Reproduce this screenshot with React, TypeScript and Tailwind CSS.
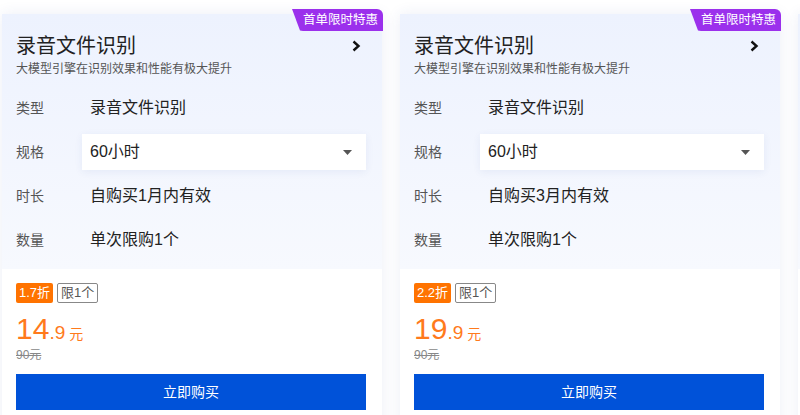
import React from "react";

type Plan = {
  duration: string;
  discount: string;
  price: string;
  decimal: string;
};

const plans: Plan[] = [
  { duration: "自购买1月内有效", discount: "1.7折", price: "14", decimal: ".9" },
  { duration: "自购买3月内有效", discount: "2.2折", price: "19", decimal: ".9" },
];

const font = {
  fontFamily: '"Liberation Sans", "Noto Sans CJK SC", sans-serif',
};

function Row({ label, children }: { label: string; children: React.ReactNode }) {
  return (
    <div className="flex h-[44px] items-center">
      <div className="w-[66px] shrink-0 text-[14px] text-[#555]">{label}</div>
      <div className="flex-1">{children}</div>
    </div>
  );
}

function PlanCard({ plan }: { plan: Plan }) {
  return (
    <div className="relative w-[380px] shrink-0 bg-white shadow-[0_0_14px_rgba(40,70,160,0.09)]">
      {/* Badge */}
      <div className="absolute right-[-1px] top-[-5px] flex h-[22px] w-[91px] items-center justify-end rounded-tr-[6px] bg-[#9b30ec] pr-[5px] text-[12.5px] text-white [clip-path:polygon(0_0,100%_0,100%_100%,11px_100%,8px_98%)]">
        首单限时特惠
      </div>

      {/* Top */}
      <div className="bg-gradient-to-b from-[#edf2fe] to-[#f7f9fe] pl-[14px] pr-[16px] pt-[18px] pb-[7px]">
        <div className="flex h-[28px] items-center justify-between">
          <span className="text-[20px] text-[#222]">录音文件识别</span>
          <svg width="10" height="12" viewBox="0 0 10 12" className="mr-[5px]">
            <path d="M2.5 1.5 L7.5 6 L2.5 10.5" fill="none" stroke="#111" strokeWidth="2.4" />
          </svg>
        </div>
        <div className="h-[18px] text-[12px] leading-[18px] text-[#555]">
          大模型引擎在识别效果和性能有极大提升
        </div>
        <div className="mt-[8px]">
          <Row label="类型">
            <span className="pl-[8px] text-[16px] text-[#222]">录音文件识别</span>
          </Row>
          <Row label="规格">
            <div className="flex h-[36px] items-center justify-between bg-white pl-[8px] pr-[14px] shadow-[0_2px_8px_rgba(40,70,160,0.07)]">
              <span className="text-[16px] text-[#222]">60小时</span>
              <svg width="9" height="5" viewBox="0 0 9 5">
                <path d="M0 0 L9 0 L4.5 5 Z" fill="#555" />
              </svg>
            </div>
          </Row>
          <Row label="时长">
            <span className="pl-[8px] text-[16px] text-[#222]">{plan.duration}</span>
          </Row>
          <Row label="数量">
            <span className="pl-[8px] text-[16px] text-[#222]">单次限购1个</span>
          </Row>
        </div>
      </div>

      {/* Bottom */}
      <div className="px-[14px] pt-[14px] pb-[10px]">
        <div className="flex gap-[4px]">
          <span className="flex h-[20px] items-center rounded-[2px] bg-[#ff7300] px-[3px] text-[13px] text-white">
            {plan.discount}
          </span>
          <span className="flex h-[20px] items-center rounded-[2px] border border-[#888] px-[3px] text-[13px] text-[#555]">
            限1个
          </span>
        </div>
        <div className="mt-[8px] flex h-[36px] items-baseline leading-[36px] text-[#ff7a1c]">
          <span className="text-[30px]">{plan.price}</span>
          <span className="text-[19px]">{plan.decimal}</span>
          <span className="ml-[4px] text-[14px]">元</span>
        </div>
        <div className="h-[16px] text-[12px] leading-[16px] text-[#888] line-through">90元</div>
        <button className="mt-[11px] flex h-[36px] w-[350px] items-center justify-center bg-[#0052d9] text-[14px] text-white">
          立即购买
        </button>
      </div>
    </div>
  );
}

export default function App() {
  return (
    <div style={font} className="h-[415px] w-[800px] overflow-hidden bg-white">
      <div className="flex gap-[18px] pl-[2px] pt-[14px]">
        {plans.map((p) => (
          <PlanCard key={p.discount} plan={p} />
        ))}
        {/* next card peeking in at the edge */}
        <div className="h-[420px] w-[380px] shrink-0 bg-white shadow-[0_0_14px_rgba(40,70,160,0.09)]">
          <div className="h-[255px] bg-gradient-to-b from-[#edf2fe] to-[#f7f9fe]" />
        </div>
      </div>
    </div>
  );
}
